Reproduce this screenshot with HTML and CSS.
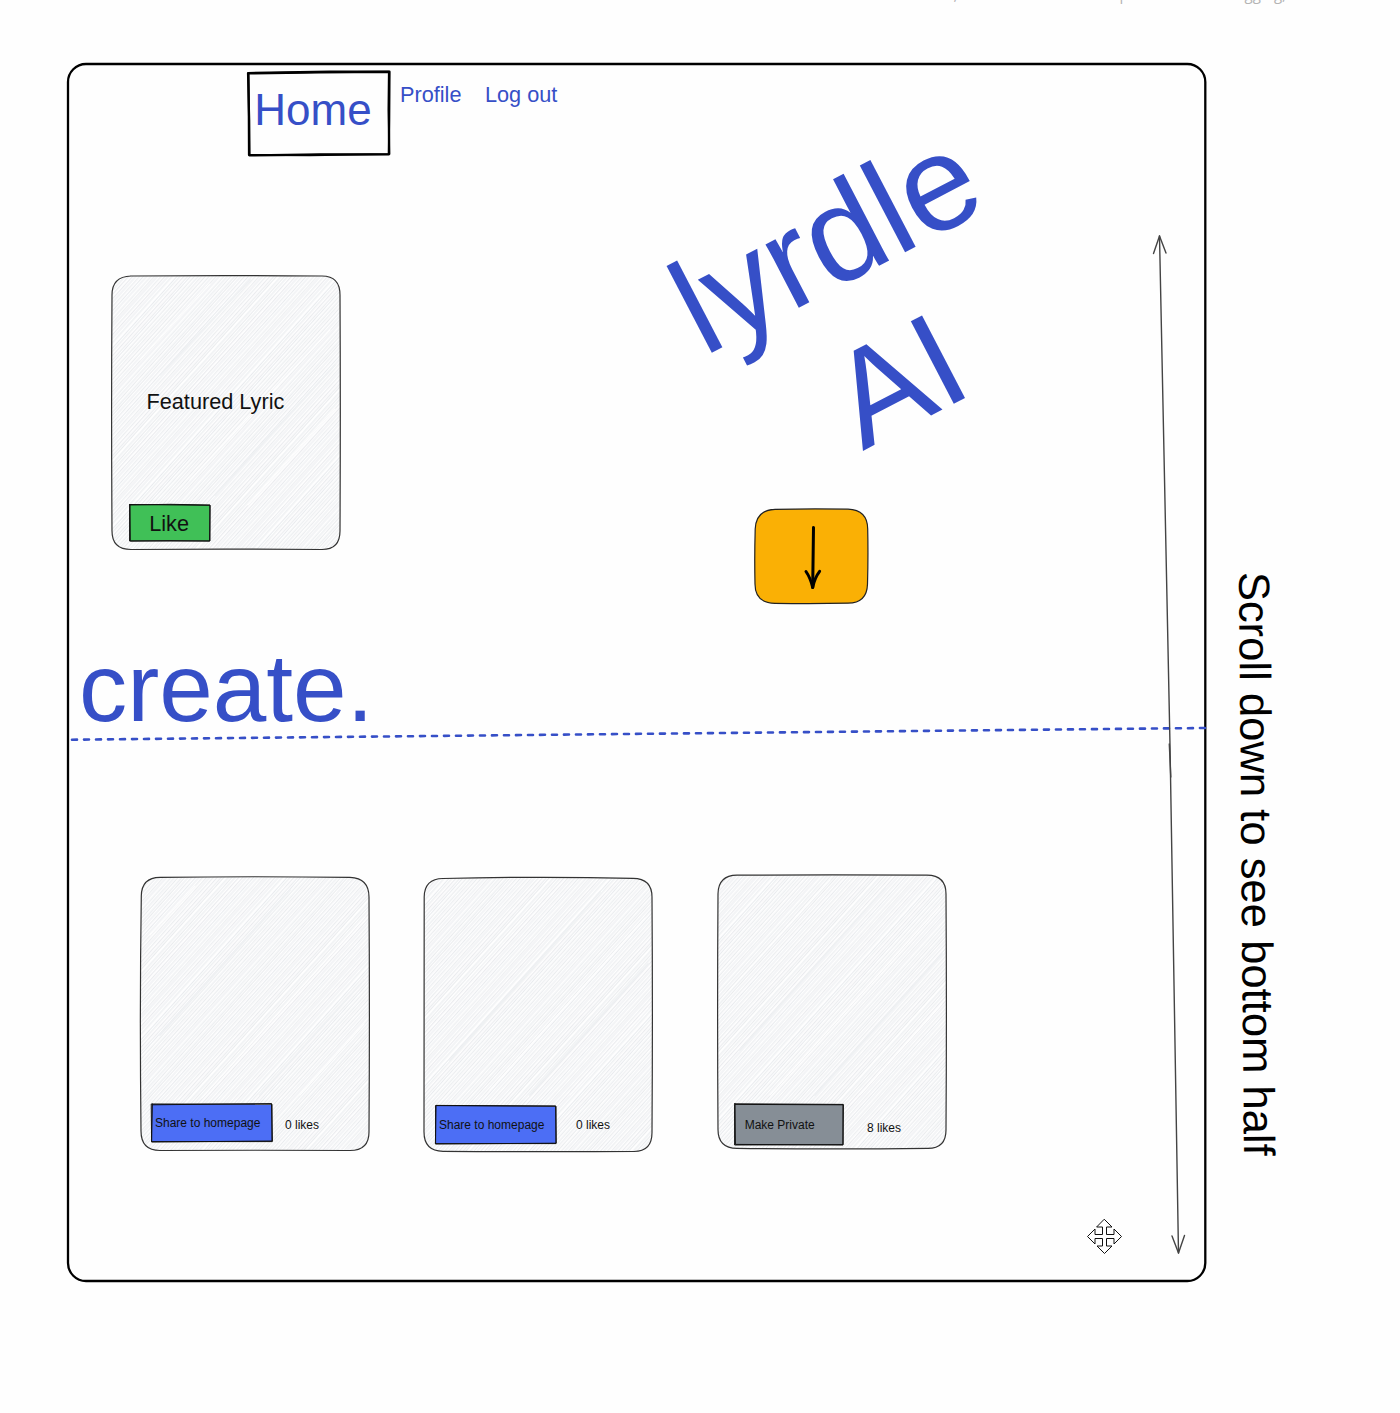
FILE: index.html
```html
<!DOCTYPE html>
<html lang="en">
<head>
<meta charset="utf-8">
<title>lyrdle AI wireframe</title>
<link rel="stylesheet" href="styles.css">
</head>
<body>
<main class="canvas">
  <svg class="shapes" viewBox="0 0 1400 1413" aria-hidden="true">
    <defs>
      <pattern id="hatch" width="121" height="400" patternUnits="userSpaceOnUse" patternTransform="rotate(42)">
        <path class="hatch-line" d="M1 0V400M3.7 0V400M6.5 0V400M9 0V400M11.8 0V400M14.7 0V400M17 0V400M19.7 0V400M22.6 0V400M25.3 0V400M27.4 0V400M30.9 0V400M33.4 0V400M35.9 0V400M38.6 0V400M41.6 0V400M44 0V400M46.8 0V400M49.5 0V400M52 0V400M55.1 0V400M57.8 0V400M60 0V400M62.8 0V400M65.6 0V400M68 0V400M70.9 0V400M74.5 0V400M76.8 0V400M79.6 0V400M82.3 0V400M84.5 0V400M87.3 0V400M90.2 0V400M92.8 0V400M95.4 0V400M98.3 0V400M101 0V400M103.7 0V400M106 0V400M109.2 0V400M111.9 0V400M114.4 0V400M117.2 0V400M119.4 0V400"/>
      </pattern>
    </defs>

    <rect class="frame" x="68" y="64" width="1137.3" height="1217" rx="18"/>

    <g class="home-box">
      <path d="M248.5 73.5L320 72.3L389 71.8L388.6 110L389.3 154L310 155.2L249 155L248.8 112Z"/>
      <path d="M248 73L330 71.6L389.5 71.5L389.2 120L388.8 154.5L320 154.3L249.5 155.5L249.2 120Z"/>
    </g>

    <path class="card" d="M130 276Q225 275.2 322 276Q340 276 340 295Q340.6 410 340 531Q340 549.5 322 549.5Q225 548.8 131 549.5Q112 549.5 112 531Q111.2 410 112 295Q112 276.5 131 276Z"/>
    <path class="card" d="M160 877.3Q255 876.2 350 877.3Q369 878 369 897Q369.8 1015 369 1132Q369 1150.5 350 1150.5Q255 1150 160 1150.5Q141 1150.5 141 1131Q139.6 1010 141.3 896Q141.5 877.5 160 877.3Z"/>
    <path class="card" d="M443 878.5Q540 876.2 633 878.3Q652 878.5 652 897Q652.8 1015 652 1132.5Q652 1151.5 634 1151.5Q540 1152 443 1151.3Q424 1151 424 1132Q423.6 1010 424.2 897Q424.4 878.8 443 878.5Z"/>
    <path class="card" d="M737 875.2Q832 874.6 927 875.2Q946 875.5 946 894Q946.8 1012 946 1130Q946 1148.4 928 1148.4Q832 1149.4 737 1148.4Q718 1148.2 718 1129.5Q717.2 1010 718 894Q718.2 875.4 737 875.2Z"/>

    <g class="streak-light">
      <path d="M270 520L335 447M248 505L335 409M140 360L210 284M190 480L330 330"/>
      <path d="M202 1098L365 917M150 935L195 886M300 1095L364 1024"/>
      <path d="M490 1090L645 918M440 1010L550 888M570 1095L648 1008"/>
      <path d="M770 1095L940 906M730 990L830 880M860 1095L942 1004"/>
    </g>
    <g class="streak-dark">
      <path d="M160 375L250 280M215 495L335 365"/>
      <path d="M160 1035L290 890M260 1095L364 980"/>
      <path d="M450 1060L600 892M530 1095L648 964"/>
      <path d="M740 1050L885 888M815 1095L942 954"/>
    </g>

    <g class="button like-fill"><path d="M130 505L170 504.3L210 505L209.5 541L170 540.6L130 541Z"/><path class="retrace" d="M129.5 504.5L210 505.3L210 541L130.3 541L130 504.5"/></g>
    <g class="button share-fill"><path d="M151.6 1104L272 1104.2L272 1141L152 1142Z"/><path class="retrace" d="M152.5 1104.8L271.5 1103.6L272.4 1141.6L151.6 1141.6L152.4 1104"/></g>
    <g class="button share-fill"><path d="M436 1105.6L556 1106.2L556 1143.6L436 1143.6Z"/><path class="retrace" d="M436.4 1105.4L555.6 1106L556.2 1143.2L435.4 1144L436 1105.4"/></g>
    <g class="button private-fill"><path d="M735 1104.4L843 1104.8L843 1144.6L735 1145Z"/><path class="retrace" d="M734.4 1103.8L843.4 1104.4L843 1145L735.4 1144.4L735 1103.6"/></g>

    <path class="down-button" d="M775 509.3Q812 508.7 848 509.2Q867.5 510 867.7 529Q868.3 557 867.5 584Q867 603 848 603.2Q812 603.8 775 603.3Q755 603 755 584Q754.4 557 755.2 529Q756 510 775 509.3Z"/>
    <g class="down-arrow">
      <path d="M813.5 527.5L812.7 587.5"/>
      <path d="M806 571.5Q810.5 578 812.7 587.5Q814.5 578 819.6 571.3"/>
    </g>

    <path class="divider" d="M72 739.7L1205 728"/>

    <g class="scroll-arrow">
      <path d="M1159.5 236L1170 745L1178.5 1253"/>
      <path d="M1159.5 236L1153.5 253.5M1159.5 236L1166 253"/>
      <path d="M1178.5 1253L1172 1236M1178.5 1253L1184.5 1235.5"/>
      <path d="M1169.3 744L1170.8 777"/>
    </g>

    <path class="move-cursor" transform="translate(1104.5 1236.5)" d="M0-17L7.5-9.5H2V-2H9.5V-7.5L17 0L9.5 7.5V2H2V9.5H7.5L0 17L-7.5 9.5H-2V2H-9.5V7.5L-17 0L-9.5-7.5V-2H-2V-9.5H-7.5Z"/>
  </svg>

  <p class="label hint">To move canvas, hold mouse wheel or spacebar while dragging, or use the hand tool</p>

  <nav>
    <a class="label nav-home">Home</a>
    <a class="label nav-link nav-profile">Profile</a>
    <a class="label nav-link nav-logout">Log out</a>
  </nav>

  <h1 class="label title title-name">lyrdle</h1>
  <h1 class="label title title-ai">AI</h1>

  <span class="label medium featured">Featured Lyric</span>
  <span class="label medium like">Like</span>

  <h2 class="label create">create.</h2>

  <span class="label small share-one">Share to homepage</span>
  <span class="label small likes-one">0 likes</span>
  <span class="label small share-two">Share to homepage</span>
  <span class="label small likes-two">0 likes</span>
  <span class="label small make-private">Make Private</span>
  <span class="label small likes-three">8 likes</span>

  <span class="label scroll-note">Scroll down to see bottom half</span>
</main>
</body>
</html>
```
FILE: styles.css
```css
body {
  margin: 0;
  background: #fefefe;
}

.canvas {
  position: relative;
  width: 1400px;
  height: 1413px;
  overflow: hidden;
  font-family: "Liberation Sans", Arial, sans-serif;
  color: #000;
}

.shapes {
  display: block;
  width: 1400px;
  height: 1413px;
  fill: none;
  stroke-linecap: round;
  stroke-linejoin: round;
}

.frame { stroke: #000; stroke-width: 2.3; }
.home-box { stroke: #000; stroke-width: 2.2; }
.hatch-line { stroke: #e9ebee; stroke-width: 1.1; }
.streak-light { stroke: #fefefe; stroke-width: 1.1; }
.streak-dark { stroke: #eff1f3; stroke-width: 1.8; }
.card { fill: url(#hatch); stroke: #333; stroke-width: 1.2; }
.button { stroke: #111; stroke-width: 1; }
.like-fill { fill: #40c057; }
.share-fill { fill: #4c6ef5; }
.private-fill { fill: #868e96; }
.retrace { fill: none; }
.down-button { fill: #fab005; stroke: #222; stroke-width: 1.2; }
.down-arrow { stroke: #000; stroke-width: 3; }
.divider { stroke: #364fc7; stroke-width: 2.6; stroke-dasharray: 5 7; }
.scroll-arrow { stroke: #444; stroke-width: 1.4; }
.move-cursor { fill: #fff; stroke: #111; stroke-width: 1; stroke-linejoin: miter; }

.label {
  position: absolute;
  margin: 0;
  font-weight: 400;
  line-height: 1;
  white-space: nowrap;
}

.hint {
  left: 842px;
  top: -13px;
  font-family: "Open Sans", sans-serif;
  font-size: 15px;
  color: #b4b4b4;
}

.nav-home { left: 254.3px; top: 87.8px; font-size: 44px; color: #364fc7; }
.nav-link { top: 84.4px; font-size: 21.7px; color: #364fc7; }
.nav-profile { left: 400px; }
.nav-logout { left: 485px; }

.title {
  font-size: 135.2px;
  color: #364fc7;
  transform-origin: 0 84.65%;
  transform: rotate(-27.5deg);
}
.title-name { left: 703.5px; top: 243.2px; }
.title-ai { left: 862.7px; top: 337.3px; }

.medium { font-size: 21.7px; color: #111; }
.featured { left: 146.5px; top: 390.5px; }
.like { left: 149.2px; top: 512.5px; }

.create { left: 79px; top: 640px; font-size: 96.3px; color: #364fc7; }

.small { font-size: 12px; color: #111; }
.share-one { left: 155px; top: 1117px; }
.likes-one { left: 285px; top: 1119px; }
.share-two { left: 439px; top: 1119px; }
.likes-two { left: 576px; top: 1119px; }
.make-private { left: 744.7px; top: 1119px; }
.likes-three { left: 867px; top: 1122px; }

.scroll-note {
  left: 1238.2px;
  top: 534.5px;
  font-size: 43.6px;
  transform-origin: 0 84.65%;
  transform: rotate(89.5deg);
}
```
